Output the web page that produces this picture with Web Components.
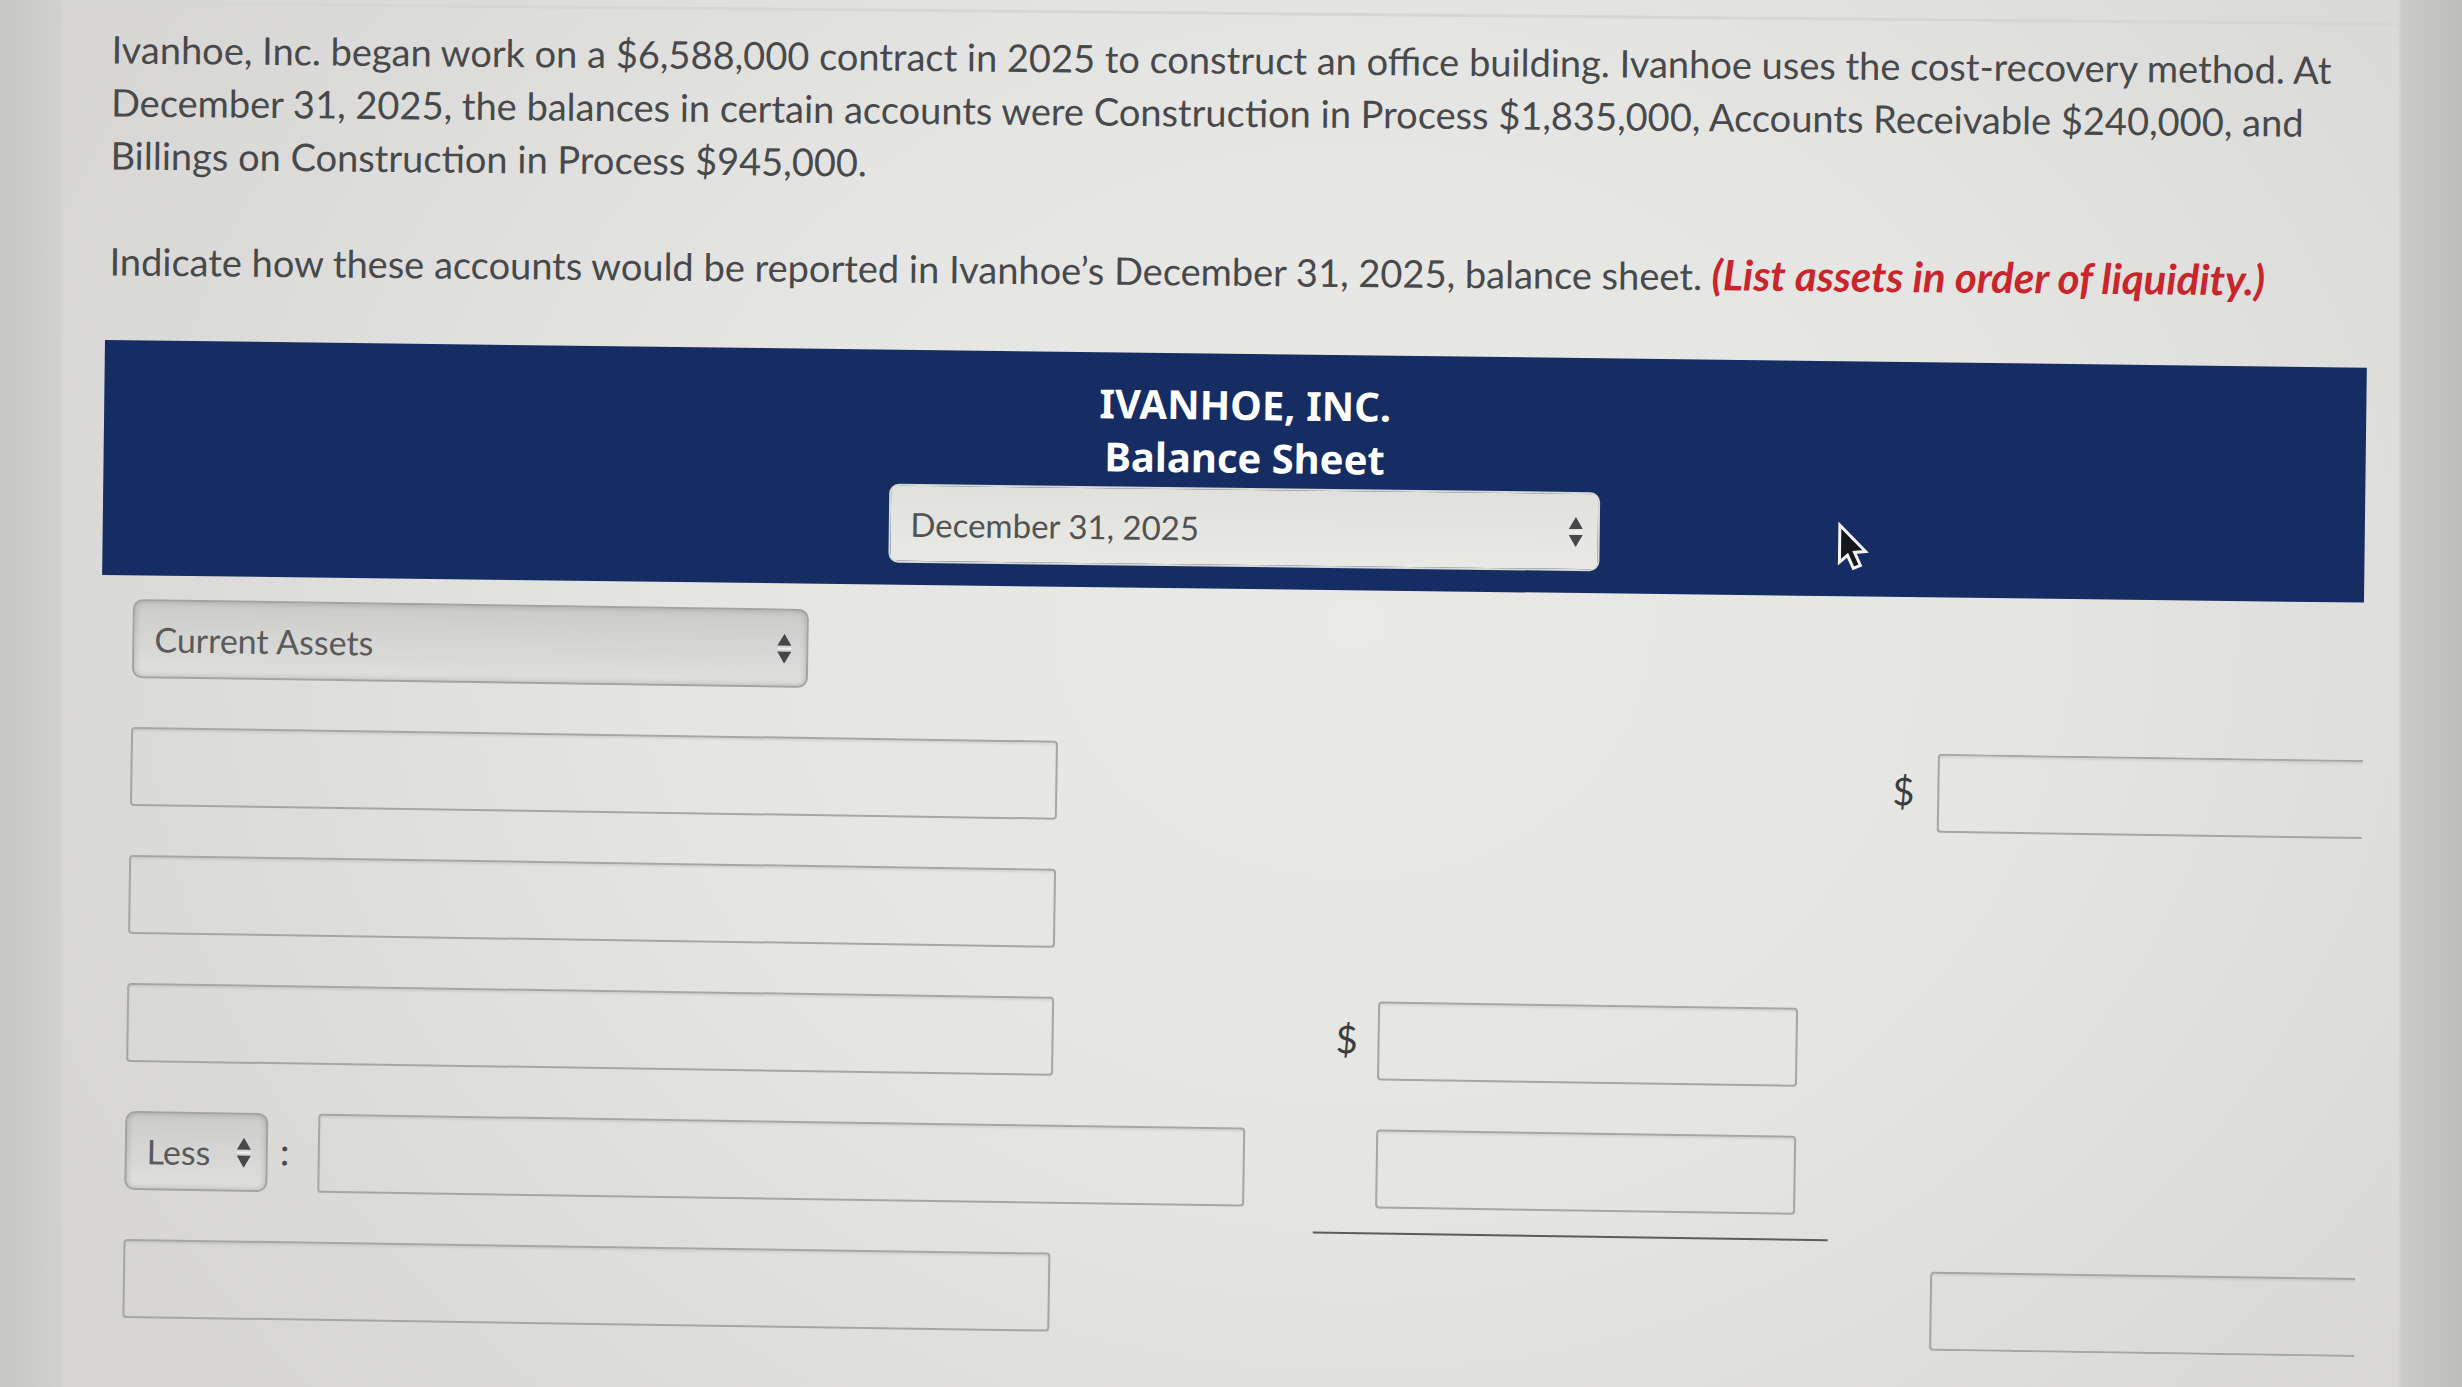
<!DOCTYPE html>
<html lang="en">
<head>
<meta charset="utf-8">
<title>Ivanhoe, Inc. Balance Sheet</title>
<style>
  html, body { margin: 0; height: 100%; overflow: hidden; }
  body { font-family: Lato, "Liberation Sans", sans-serif; color: #48494b; background: #cfcfcd; }
</style>
</head>
<body>
<question-page>
  <problem-statement>
    <p>Ivanhoe, Inc. began work on a $6,588,000 contract in 2025 to construct an office building. Ivanhoe uses the cost-recovery method. At December 31, 2025, the balances in certain accounts were Construction in Process $1,835,000, Accounts Receivable $240,000, and Billings on Construction in Process $945,000.</p>
    <p>Indicate how these accounts would be reported in Ivanhoe’s December 31, 2025, balance sheet. <em>(List assets in order of liquidity.)</em></p>
  </problem-statement>
  <sheet-banner company="IVANHOE, INC." statement="Balance Sheet">
    <drop-down label="Statement date" value="December 31, 2025" tone="light"></drop-down>
  </sheet-banner>
  <sheet-rows>
    <sheet-row><drop-down slot="account" class="section" label="Section" value="Current Assets"></drop-down></sheet-row>
    <sheet-row>
      <text-field slot="account" label="Account 1"></text-field>
      <money-field slot="total" label="Amount 1" sign="$"></money-field>
    </sheet-row>
    <sheet-row><text-field slot="account" label="Account 2"></text-field></sheet-row>
    <sheet-row>
      <text-field slot="account" label="Account 3"></text-field>
      <money-field slot="detail" label="Amount 3" sign="$"></money-field>
    </sheet-row>
    <sheet-row ruled>
      <drop-down slot="account" class="sign" label="Add or less" value="Less"></drop-down>
      <span slot="account" class="colon">:</span>
      <text-field slot="account" label="Account 4"></text-field>
      <money-field slot="detail" label="Amount 4"></money-field>
    </sheet-row>
    <sheet-row last>
      <text-field slot="account" label="Account 5"></text-field>
      <money-field slot="total" label="Amount 5"></money-field>
    </sheet-row>
  </sheet-rows>
</question-page>

<script>
class Base extends HTMLElement {
  connectedCallback() {
    if (this.shadowRoot) return;
    this.attachShadow({ mode: 'open' }).innerHTML = this.view();
  }
  attr(name) { return this.getAttribute(name) || ''; }
}

customElements.define('question-page', class extends Base {
  view() {
    return `<style>
      :host { display: block; height: 100%; overflow: hidden;
        background: linear-gradient(90deg, #c6c6c5 0, #d1d1d0 60px, #d1d1d0 61px, transparent 62px, transparent calc(100% - 64px), #cacac9 calc(100% - 60px), #bebebd 100%),
          radial-gradient(ellipse 60% 90% at 55% 45%, #e9e9e6 0%, #e5e5e3 45%, #d6d5d3 100%); }
      main { display: flex; flex-direction: column; padding-top: 1px; }
    </style><main><slot></slot></main>`;
  }
});

customElements.define('problem-statement', class extends Base {
  view() {
    return `<style>
      :host { display: block; margin: 0 62px; border-top: 3px solid #d6d6d5; padding: 18px 0 0 50px;
        font-size: 38px; line-height: 53px; transform: rotate(0.53deg); transform-origin: 0 0; }
      ::slotted(p) { margin: 0 0 53px; }
    </style><slot></slot>`;
  }
  connectedCallback() {
    super.connectedCallback();
    const note = this.querySelector('em');
    if (note) Object.assign(note.style, { color: '#c9252c', fontSize: '42px', lineHeight: '1', fontWeight: '700', fontStyle: 'italic' });
  }
});

customElements.define('sheet-banner', class extends Base {
  view() {
    return `<style>
      :host { display: block; position: relative; margin: 0 95px 0 105px; background: #152d62;
        transform: rotate(0.7deg); transform-origin: 0 0; }
      header { display: flex; flex-direction: column; align-items: center; padding: 24px 0 22px 20px; }
      h1, h2 { margin: 0; color: #fff; font: 700 40px/53px "Noto Sans", sans-serif; }
      ::slotted(*) { width: 711px; margin-top: 4px; }
      svg { position: absolute; left: 1734px; top: 160px; width: 34px; height: 50px; }
    </style>
    <header><h1>${this.attr('company')}</h1><h2>${this.attr('statement')}</h2><slot></slot></header>
    <svg viewBox="0 0 34 50" aria-hidden="true"><path d="M3 4V41L11 34L17 47L24 44L18 31L29 30Z" fill="#15171c" stroke="#f4f4f2" stroke-width="3" stroke-linejoin="miter"/></svg>`;
  }
});

customElements.define('sheet-rows', class extends Base {
  view() {
    return `<style>
      :host { display: flex; flex-direction: column; margin: 24px 97px 0 133px;
        transform: rotate(0.85deg); transform-origin: 0 0; }
    </style><slot></slot>`;
  }
});

customElements.define('sheet-row', class extends Base {
  view() {
    return `<style>
      :host { display: grid; grid-template-columns: 1189fr 515fr 528fr; min-height: 128px; }
      div { display: flex; align-items: flex-start; min-width: 0; }
      .detail { padding: 0 33px 0 0; }
      .total { overflow: hidden; }
      :host([ruled]) .detail { border-bottom: 2px solid #5d5d58; margin-bottom: 23px; }
      :host([last]) { min-height: 85px; }
      :host([last]) .total { align-items: flex-end; }
      ::slotted(text-field) { flex: 0 0 78%; }
      ::slotted(money-field) { flex: 1; }
      ::slotted(.section) { width: 676px; }
      ::slotted(.sign) { width: 143px; }
      ::slotted(.colon) { width: 50px; font-size: 38px; line-height: 74px; text-align: center;
        box-sizing: border-box; padding-right: 16px; }
    </style>
    <div><slot name="account"></slot></div>
    <div class="detail"><slot name="detail"></slot></div>
    <div class="total"><slot name="total"></slot></div>`;
  }
});

const fieldStyle = `input { display: block; box-sizing: border-box; width: 100%; height: 79px; margin: 0;
  padding: 0 20px; border: 2px solid #a6a6a3; border-radius: 4px; background: transparent;
  font: 34px Lato, sans-serif; color: #48494b; box-shadow: inset 0 2px 2px rgba(0,0,0,.07); outline: 0; }`;

customElements.define('text-field', class extends Base {
  view() {
    return `<style>:host { display: block; } ${fieldStyle}</style>
      <input type="text" aria-label="${this.attr('label')}">`;
  }
});

customElements.define('money-field', class extends Base {
  view() {
    return `<style>
      :host { display: flex; align-items: flex-start; }
      label { flex: 0 0 62px; box-sizing: border-box; padding-left: 20px; font-size: 38px; line-height: 74px; color: #3c3d3f; }
      :host([slot=total]) label { flex-basis: 103px; padding-left: 58px; }
      ${fieldStyle}
      input { flex: 1 1 0; min-width: 0; }
      :host([slot=total]) input { flex: 0 0 100%; }
    </style>
    <label for="amount">${this.attr('sign')}</label><input id="amount" type="text" inputmode="decimal" aria-label="${this.attr('label')}">`;
  }
});

customElements.define('drop-down', class extends Base {
  view() {
    return `<style>
      :host { display: block; position: relative; }
      select { appearance: none; display: block; box-sizing: border-box; width: 100%; height: 79px; margin: 0;
        padding: 0 20px; border: 2px solid #a3a3a2; border-radius: 10px; color: #5a5a5b;
        background: linear-gradient(#cbcbca, #dfdfdd); box-shadow: inset 0 0 6px rgba(0,0,0,.2);
        font: 34px Lato, sans-serif; outline: 0; }
      :host([tone=light]) select { border-color: #d8d8d6; color: #515253; font-size: 33px;
        background: linear-gradient(#e0e0dd, #e9e9e5); box-shadow: none; }
      svg { position: absolute; right: 16px; top: 25px; width: 16px; height: 30px; pointer-events: none; }
    </style>
    <select aria-label="${this.attr('label')}"><option>${this.attr('value')}</option></select>
    <svg viewBox="0 0 16 30" aria-hidden="true"><path d="M8 0L15 12H1Z M1 18H15L8 30Z" fill="#48484a"/><path d="M1 15H15" stroke="#eee" stroke-width="2"/></svg>`;
  }
});
</script>
</body>
</html>
